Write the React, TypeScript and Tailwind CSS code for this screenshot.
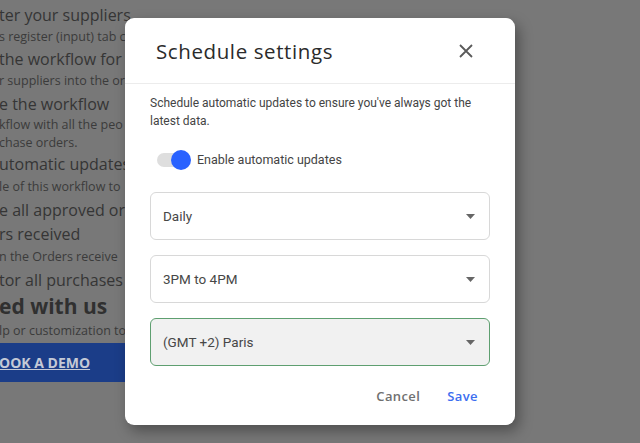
import React, { useState } from "react";

const bgLines = [
  { t: "ter your suppliers", h: "h-[22px] text-[16px] text-[#353535]" },
  { t: "s register (input) tab c", h: "h-[22px] text-[12.5px] text-[#3b3b3b]" },
  { t: "the workflow for th", h: "h-[22px] text-[16px] text-[#353535]" },
  { t: "r suppliers into the or", h: "h-[22px] text-[12.5px] text-[#3b3b3b]" },
  { t: "e the workflow", h: "h-[24px] text-[16px] text-[#353535]" },
  { t: "kflow with all the peo", h: "h-[18px] text-[12.5px] text-[#3b3b3b]" },
  { t: "chase orders.", h: "h-[18px] text-[12.5px] text-[#3b3b3b]" },
  { t: "utomatic updates", h: "h-[24px] text-[16px] text-[#353535]" },
  { t: "le of this workflow to", h: "h-[22px] text-[12.5px] text-[#3b3b3b]" },
  { t: "e all approved ord", h: "h-[24px] text-[16px] text-[#353535]" },
  { t: "rs received", h: "h-[24px] text-[16px] text-[#353535]" },
  { t: "n the Orders receive", h: "h-[22px] text-[12.5px] text-[#3b3b3b]" },
  { t: "tor all purchases i", h: "h-[24px] text-[16px] text-[#353535]" },
];

function Select({ value, focused }: { value: string; focused?: boolean }) {
  return (
    <div
      className={
        "h-[48px] rounded-[6px] border flex items-center justify-between pl-[12px] pr-[14px] " +
        (focused ? "bg-[#f1f1f1] border-[#5e9f70]" : "bg-white border-[#d8d8d8]")
      }
    >
      <span className="text-[13.5px] text-[#474747]">{value}</span>
      <svg width="9" height="5" viewBox="0 0 9 5">
        <path d="M0 0 L9 0 L4.5 5 Z" fill="#666" />
      </svg>
    </div>
  );
}

export default function App() {
  const [enabled, setEnabled] = useState(true);

  return (
    <div className="relative w-[640px] h-[443px] overflow-hidden bg-[#787878] font-['Roboto',sans-serif]">
      {/* dimmed page behind the dialog */}
      <div className="pt-[4px] font-['Open_Sans',sans-serif] whitespace-nowrap -ml-[1px]">
        {bgLines.map((l) => (
          <div key={l.t} className={"flex items-center " + l.h}>
            {l.t}
          </div>
        ))}
        <div className="h-[30px] flex items-center text-[21px] font-bold text-[#303030]">ed with us</div>
        <div className="h-[19px] flex items-center text-[12.5px] text-[#3b3b3b]">lp or customization to</div>
        <div className="mt-[2px] h-[39px] w-[140px] bg-[#1b3d88] flex items-center">
          <span className="text-[14px] font-bold text-[#c4c9d6] underline">OOK A DEMO</span>
        </div>
      </div>

      {/* dialog */}
      <div className="absolute left-[125px] top-[18px] w-[390px] h-[407px] bg-white rounded-[9px] shadow-[4px_6px_14px_rgba(0,0,0,0.35)] flex flex-col">
        <div className="h-[66px] border-b border-[#ececec] flex items-center justify-between pl-[31px] pr-[42px]">
          <span className="font-['Open_Sans',sans-serif] text-[20.5px] tracking-[0.6px] font-medium text-[#2b2b2b] pt-[2px]">
            Schedule settings
          </span>
          <svg width="14" height="14" viewBox="0 0 14 14">
            <path d="M1 1 L13 13 M13 1 L1 13" stroke="#5a5a5a" strokeWidth="1.8" />
          </svg>
        </div>

        <div className="px-[25px] pt-[10px]">
          <p className="text-[12px] leading-[18px] text-[#444]">
            Schedule automatic updates to ensure you've always got the latest data.
          </p>

          <div className="mt-[20px] flex items-center h-[20px] pl-[7px]">
            <button
              onClick={() => setEnabled(!enabled)}
              className="relative w-[34px] h-[20px] flex items-center"
            >
              <span className="w-[30px] h-[14px] rounded-full bg-[#dedede]" />
              <span
                className={
                  "absolute top-0 w-[20px] h-[20px] rounded-full " +
                  (enabled ? "left-[14px] bg-[#2962ff]" : "left-0 bg-white shadow")
                }
              />
            </button>
            <span className="ml-[6px] text-[12.5px] text-[#444]">Enable automatic updates</span>
          </div>

          <div className="mt-[22px] flex flex-col gap-[15px]">
            <Select value="Daily" />
            <Select value="3PM to 4PM" />
            <Select value="(GMT +2) Paris" focused />
          </div>
        </div>

        <div className="mt-auto mb-[19px] flex justify-end items-center gap-[27px] pr-[37px] font-['Open_Sans',sans-serif] text-[13px] font-semibold">
          <span className="text-[#707070] tracking-[0.4px]">Cancel</span>
          <span className="text-[#3c6ef0] tracking-[0.4px]">Save</span>
        </div>
      </div>
    </div>
  );
}
